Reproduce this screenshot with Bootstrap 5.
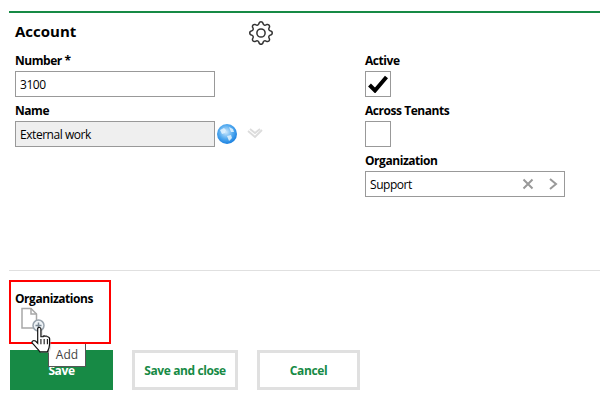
<!DOCTYPE html>
<html lang="en">
<head>
    <meta charset="UTF-8">
    <meta name="viewport" content="width=device-width, initial-scale=1.0">
    <title>Account</title>
    <link href="https://cdn.jsdelivr.net/npm/bootstrap@5.3.0/dist/css/bootstrap.min.css" rel="stylesheet">
    <style>
        body {
            font-family: "Open Sans", "Noto Sans", sans-serif;
            font-size: 12px;
            color: #000;
            background: #fff;
            overflow: hidden;
        }
        .page-wrap { width: 602px; height: 402px; padding: 11px 2px 0 9px; position: relative; }
        .form-top { border-top: 2px solid #178a45; height: 259px; padding: 8px 0 0 6px; }
        .form-head { height: 32px; }
        .form-title { font-size: 15px; font-weight: 700; width: 234px; line-height: 20px; margin-bottom: 0; }
        .form-left { width: 350px; }
        .form-right { padding-top: 32px; }
        .fld-label { display: block; font-weight: 700; line-height: 16px; height: 14px; margin: 0 0 4px; font-size: 12px; letter-spacing: -.45px; }
        .fld-box { width: 200px; height: 26px; border: 1px solid #999; padding: 0 4px; line-height: 26px; letter-spacing: -.45px; }
        .fld-ro { background: #efefef; }
        .fld-gap { margin-bottom: 6px; }
        .chk-box { width: 26px; height: 26px; border: 1px solid #999; }
        .globe-ico { margin-left: 2px; }
        .tick-ico { margin-left: 10px; }
        .pick-text { padding-top: 2px; }
        .clear-icons { gap: 14px; margin-right: 2px; }
        .org-area { width: 102px; height: 64px; border: 2px solid #f00; margin-top: 9px; padding: 9px 4px 0; }
        .org-label { font-weight: 700; line-height: 16px; letter-spacing: -.45px; }
        .act-btn { width: 103px; height: 40px; font-size: 12px; font-weight: 700; border-radius: 0; padding: 2px 0 0; letter-spacing: -.4px; }
        .act-save { background: #178a45; border: 0; color: #fff; }
        .act-other { width: 106px; background: #fff; border: 3px solid #e0e0e0; color: #178a45; }
        .act-row { gap: 19px; margin: 6px 0 0 1px; }
        .act-row .act-other + .act-other { width: 103px; }
        .add-ico { position: absolute; left: 21px; top: 307px; }
        .hover-tip { position: absolute; left: 48px; top: 344px; width: 38px; height: 23px; background: #fff; border: 1px solid #555; border-top: 0; text-align: center; line-height: 21px; color: #444; }
        .hand-cursor { position: absolute; left: 31px; top: 326px; }
        .line-soft { border-top: 1px solid #e0e0e0; }
    </style>
</head>
<body>
    <div class="page-wrap">
        <div class="form-top">
            <div class="d-flex">
                <div class="form-left">
                    <div class="form-head d-flex align-items-start">
                        <h5 class="form-title">Account</h5>
                        <!-- settings gear -->
                        <svg width="24" height="24" viewBox="0 0 16 16" fill="#333">
                            <path d="M8 4.754a3.246 3.246 0 1 0 0 6.492 3.246 3.246 0 0 0 0-6.492zM5.754 8a2.246 2.246 0 1 1 4.492 0 2.246 2.246 0 0 1-4.492 0z"/>
                            <path d="M9.796 1.343c-.527-1.79-3.065-1.79-3.592 0l-.094.319a.873.873 0 0 1-1.255.52l-.292-.16c-1.64-.892-3.433.902-2.54 2.541l.159.292a.873.873 0 0 1-.52 1.255l-.319.094c-1.79.527-1.79 3.065 0 3.592l.319.094a.873.873 0 0 1 .52 1.255l-.16.292c-.892 1.64.901 3.434 2.541 2.54l.292-.159a.873.873 0 0 1 1.255.52l.094.319c.527 1.79 3.065 1.79 3.592 0l.094-.319a.873.873 0 0 1 1.255-.52l.292.16c1.64.893 3.434-.902 2.54-2.541l-.159-.292a.873.873 0 0 1 .52-1.255l.319-.094c1.79-.527 1.79-3.065 0-3.592l-.319-.094a.873.873 0 0 1-.52-1.255l.16-.292c.893-1.64-.902-3.433-2.541-2.54l-.292.159a.873.873 0 0 1-1.255-.52l-.094-.319zm-2.633.283c.246-.835 1.428-.835 1.674 0l.094.319a1.873 1.873 0 0 0 2.693 1.115l.291-.16c.764-.415 1.6.42 1.184 1.185l-.159.292a1.873 1.873 0 0 0 1.116 2.692l.318.094c.835.246.835 1.428 0 1.674l-.319.094a1.873 1.873 0 0 0-1.115 2.693l.16.291c.415.764-.42 1.6-1.185 1.184l-.291-.159a1.873 1.873 0 0 0-2.693 1.116l-.094.318c-.246.835-1.428.835-1.674 0l-.094-.319a1.873 1.873 0 0 0-2.692-1.115l-.292.16c-.764.415-1.6-.42-1.184-1.185l.159-.291A1.873 1.873 0 0 0 1.945 8.93l-.319-.094c-.835-.246-.835-1.428 0-1.674l.319-.094A1.873 1.873 0 0 0 3.06 4.377l-.16-.292c-.415-.764.42-1.6 1.185-1.184l.292.159a1.873 1.873 0 0 0 2.692-1.115l.094-.319z"/>
                        </svg>
                    </div>
                    <label class="fld-label">Number *</label>
                    <div class="fld-box fld-gap">3100</div>
                    <label class="fld-label">Name</label>
                    <div class="d-flex align-items-center">
                        <div class="fld-box fld-ro">External work</div>
                        <!-- globe -->
                        <svg class="globe-ico" width="20" height="20" viewBox="0 0 20 20">
                            <defs>
                                <radialGradient id="globeFill" cx="45%" cy="40%" r="60%">
                                    <stop offset="0" stop-color="#cde8fc"/>
                                    <stop offset=".6" stop-color="#4fa8ef"/>
                                    <stop offset="1" stop-color="#1a80e0"/>
                                </radialGradient>
                            </defs>
                            <circle cx="10" cy="10" r="10" fill="url(#globeFill)"/>
                            <path d="M3 6l4-2 2 2-1 3-3 1zM12 3l4 2 1 3-3 0zM10 12l4-1 1 3-3 3z" fill="#e4f3fe" opacity=".85"/>
                        </svg>
                        <!-- faded double tick -->
                        <svg class="tick-ico" width="16" height="12" viewBox="0 0 16 12" fill="none" stroke="#dcdcdc" stroke-width="1.8">
                            <path d="M1 3l7 6 7-7"/>
                            <path d="M3 1l5 4 5-4"/>
                        </svg>
                    </div>
                </div>
                <div class="form-right">
                    <label class="fld-label">Active</label>
                    <div class="chk-box fld-gap d-flex align-items-center justify-content-center">
                        <svg width="20" height="18" viewBox="0 0 20 18"><path d="M1.5 10l5.5 5.5L18.5 2" fill="none" stroke="#000" stroke-width="4"/></svg>
                    </div>
                    <label class="fld-label">Across Tenants</label>
                    <div class="chk-box fld-gap"></div>
                    <label class="fld-label">Organization</label>
                    <div class="fld-box d-flex align-items-center justify-content-between">
                        <span class="pick-text">Support</span>
                        <span class="d-flex align-items-center clear-icons">
                            <svg width="12" height="12" viewBox="0 0 12 12"><path d="M1.5 1.5l9 9M10.5 1.5l-9 9" stroke="#999" stroke-width="2" fill="none"/></svg>
                            <svg width="10" height="12" viewBox="0 0 10 12"><path d="M2 1l6 5-6 5" stroke="#999" stroke-width="2" fill="none"/></svg>
                        </span>
                    </div>
                </div>
            </div>
        </div>
        <div class="line-soft"></div>
        <div class="org-area">
            <div class="org-label">Organizations</div>
        </div>
        <div class="d-flex act-row">
            <button type="button" class="btn act-btn act-save">Save</button>
            <button type="button" class="btn act-btn act-other">Save and close</button>
            <button type="button" class="btn act-btn act-other">Cancel</button>
        </div>
        <!-- add icon + tooltip + cursor overlay -->
        <svg class="add-ico" width="26" height="26" viewBox="0 0 26 26" fill="none">
            <path d="M1 1.5h9l5.5 5.5v14H1z" fill="#fff" stroke="#a8a8a8" stroke-width="1.5"/>
            <path d="M10 1.5V7h5.5" stroke="#a8a8a8" stroke-width="1.5"/>
            <circle cx="17.5" cy="18.5" r="5.5" fill="#eef3f7" stroke="#98a3ad" stroke-width="1.5"/>
            <path d="M14.5 18.5h6M17.5 15.5v6" stroke="#7d8a95" stroke-width="1.5"/>
        </svg>
        <div class="hover-tip">Add</div>
        <svg class="hand-cursor" width="22" height="28" viewBox="0 0 20 26">
            <path d="M7.5 3c1-1 3-1 3 1v7h2c0-1 2-1 2 0 0-1 2-1 2 .5 0-.5 2-.5 2 1V18c0 3-1 5-2 7H9c-1-2-3.5-4-7-8-1-2 1-3 3-2l2.500 2z" fill="#bbb" opacity=".5"/>
            <path d="M6 2c1-1 3-1 3 1v7h2c0-1 2-1 2 0 0-1 2-1 2 .5 0-.5 2-.5 2 1V17c0 3-1 5-2 7H8c-1-2-3.5-4-7-8-1-2 1-3 3-2l2 2z" fill="#fff" stroke="#111" stroke-width="1.1"/>
            <path d="M9 12v5M12 12v5M15 12v5" stroke="#111" stroke-width="1"/>
        </svg>
    </div>
    <script src="https://cdn.jsdelivr.net/npm/bootstrap@5.3.0/dist/js/bootstrap.bundle.min.js"></script>
</body>
</html>
